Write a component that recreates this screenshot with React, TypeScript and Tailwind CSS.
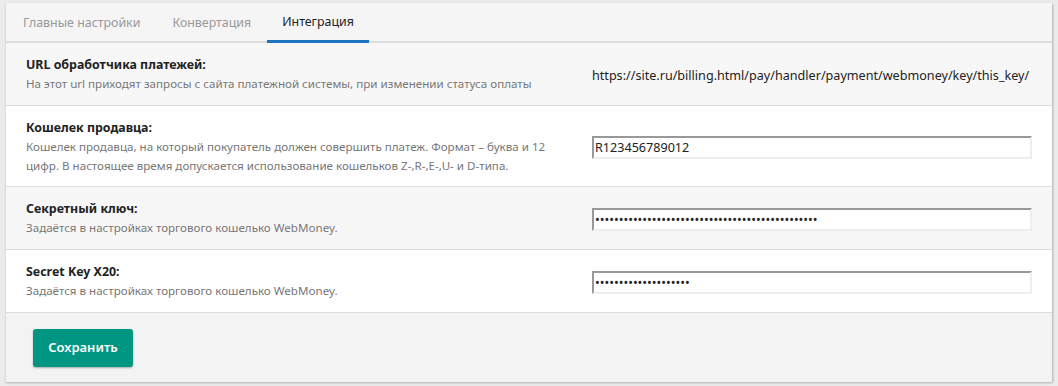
import React from "react";

const tabs = ["Главные настройки", "Конвертация", "Интеграция"];

function Field({ value, password }: { value: string; password?: boolean }) {
  return (
    <input
      type={password ? "password" : "text"}
      defaultValue={value}
      readOnly
      className="w-[440px] h-[23px] px-[1px] text-[12.6px] text-[#222] bg-white border-2 border-t-[#999] border-l-[#999] border-b-[#eee] border-r-[#eee] outline-none"
    />
  );
}

function Row({
  title,
  desc,
  grey,
  children,
  tall,
}: {
  title: string;
  desc: React.ReactNode;
  grey?: boolean;
  children: React.ReactNode;
  tall?: boolean;
}) {
  return (
    <div
      className={`flex items-center border-b border-[#ddd] ${grey ? "bg-[#f7f7f7]" : "bg-white"} ${tall ? "h-[81px]" : "h-[63px]"}`}
    >
      <div className="w-[580px] pl-[20px] pr-4">
        <div className="text-[12.4px] font-bold text-[#222] leading-[19px]">{title}</div>
        <div className="text-[11.6px] text-[#777] leading-[19px]">{desc}</div>
      </div>
      <div className="flex-1 pl-[6px]">{children}</div>
    </div>
  );
}

const secret1 = "x".repeat(47);
const secret2 = "x".repeat(20);

export default function App() {
  return (
    <div
      className="bg-[#ebebeb] min-h-[386px] pt-[3px] pl-[5px] pr-[5px]"
      style={{ fontFamily: '"Noto Sans", sans-serif' }}
    >
      <div className="bg-white border-l border-[#ddd] shadow-[1px_1px_2px_rgba(0,0,0,0.25)] w-[1047px]">
        <div className="flex h-[40px] bg-[#f5f5f5] border-b-2 border-[#ddd] pl-[1px]">
          {tabs.map((t, i) => (
            <div
              key={t}
              className={`h-[40px] flex items-center text-[12.4px] ${
                i === 2
                  ? "text-[#222] border-b-[3px] border-[#1e73be] pt-[2px] px-[15px]"
                  : "text-[#999] px-[16px]"
              }`}
            >
              {t}
            </div>
          ))}
        </div>
        <Row
          grey
          title="URL обработчика платежей:"
          desc="На этот url приходят запросы с сайта платежной системы, при изменении статуса оплаты"
        >
          <span className="text-[12.6px] text-[#222]">
            https://site.ru/billing.html/pay/handler/payment/webmoney/key/this_key/
          </span>
        </Row>
        <Row
          tall
          title="Кошелек продавца:"
          desc={
            <>
              Кошелек продавца, на который покупатель должен совершить платеж. Формат – буква и 12
              <br />
              цифр. В настоящее время допускается использование кошельков Z-,R-,E-,U- и D-типа.
            </>
          }
        >
          <Field value="R123456789012" />
        </Row>
        <Row grey title="Секретный ключ:" desc="Задаётся в настройках торгового кошелько WebMoney.">
          <Field password value={secret1} />
        </Row>
        <Row title="Secret Key X20:" desc="Задаётся в настройках торгового кошелько WebMoney.">
          <Field password value={secret2} />
        </Row>
        <div className="bg-[#f3f3f3] h-[69px] pl-[27px] pt-[16px]">
          <button className="h-[38px] w-[100px] rounded-[3px] bg-[#009682] text-white text-[13px] font-semibold shadow-[0_1px_2px_rgba(0,0,0,0.3)]">
            Сохранить
          </button>
        </div>
      </div>
    </div>
  );
}
